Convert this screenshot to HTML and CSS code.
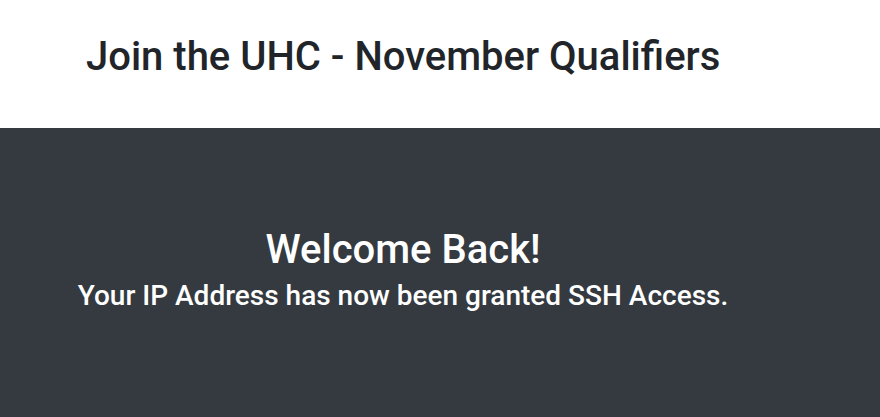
FILE: index.html
```html
<!DOCTYPE html>
<html>
<head>
<meta charset="utf-8">
<link rel="stylesheet" href="styles.css">
</head>
<body>
<header class="top">
  <h1 class="title">Join the UHC - November Qualifiers</h1>
</header>
<main class="panel">
  <div class="msg">
    <h2 class="welcome">Welcome Back!</h2>
    <p class="sub">Your IP Address has now been granted SSH Access.</p>
  </div>
</main>
</body>
</html>
```
FILE: styles.css
```css
html, body { margin: 0; padding: 0; }
body {
  font-family: Roboto, "Liberation Sans", sans-serif;
  background: #343a40;
  height: 417px;
  overflow: hidden;
}
.top {
  background: #fff;
  height: 128px;
  box-sizing: border-box;
  padding: 33px 0 0 86px;
}
.title {
  margin: 0;
  font-size: 40px;
  font-weight: 500;
  line-height: 1.2;
  color: #212529;
}
.panel {
  background: #343a40;
  height: 289px;
}
.msg {
  width: 806px;
  text-align: center;
  color: #fff;
  padding-top: 98px;
}
.welcome {
  margin: 0;
  font-size: 40px;
  font-weight: 500;
  line-height: 1.2;
}
.sub {
  margin: 5px 0 0;
  font-size: 28px;
  font-weight: 500;
  line-height: 1.2;
}
```
